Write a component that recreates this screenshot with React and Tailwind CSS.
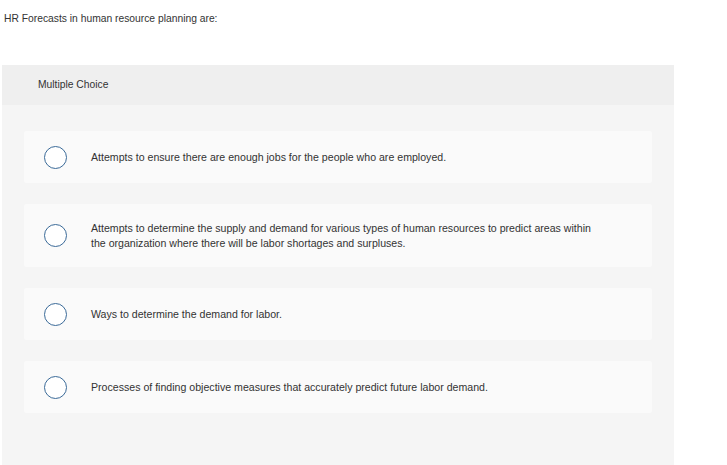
import React from 'react';

export default function App() {
    const options = [
        'Attempts to ensure there are enough jobs for the people who are employed.',
        'Attempts to determine the supply and demand for various types of human resources to predict areas within the organization where there will be labor shortages and surpluses.',
        'Ways to determine the demand for labor.',
        'Processes of finding objective measures that accurately predict future labor demand.',
    ];

    return (
        <div className="w-[727px] h-[465px] bg-white overflow-hidden text-[#333] font-['Liberation_Sans',Arial,sans-serif]">
            <div className="pl-[4px] pt-[13px] h-[65px] text-[10.3px] leading-[12px]">
                HR Forecasts in human resource planning are:
            </div>
            <div className="ml-[2px] w-[672px] h-[400px] bg-[#f5f5f5]">
                <div className="h-[40px] bg-[#efefef] pl-[36px] flex items-center text-[10.3px]">
                    Multiple Choice
                </div>
                <div className="px-[22px] pt-[26px] flex flex-col gap-[21px]">
                    {options.map((text, i) => (
                        <div
                            key={i}
                            className={`bg-[#fafafa] rounded-[2px] flex items-center pl-[20px] pr-[52px] ${i === 1 ? 'h-[63px]' : 'h-[52px]'}`}
                        >
                            <div className="w-[23px] h-[23px] shrink-0 rounded-full border-[1.5px] border-[#3a6a98] bg-white" />
                            <p className="ml-[24px] text-[10.6px] leading-[15px]">{text}</p>
                        </div>
                    ))}
                </div>
            </div>
        </div>
    );
}
